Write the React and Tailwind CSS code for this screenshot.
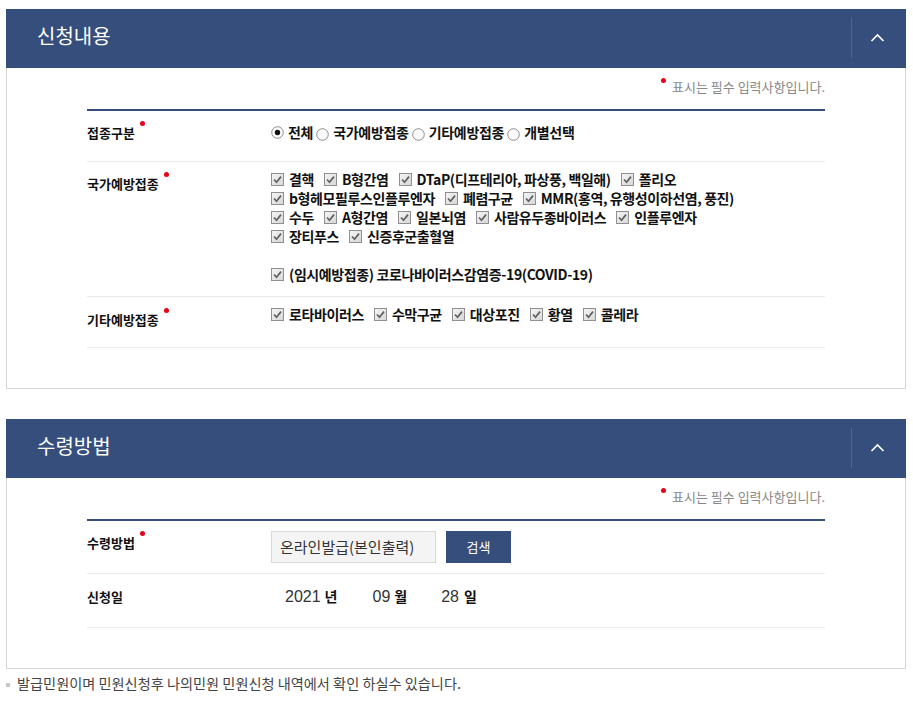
import React from "react";

const FONT = "font-['Noto_Sans_CJK_KR','Noto_Sans',sans-serif]";

function Chevron() {
  return (
    <svg width="15" height="9" viewBox="0 0 15 9" fill="none">
      <polyline points="1.5,8 7.5,2 13.5,8" stroke="#ffffff" strokeWidth="1.7" />
    </svg>
  );
}

function Check() {
  return (
    <svg width="13" height="13" viewBox="0 0 13 13" className="shrink-0">
      <defs>
        <linearGradient id="cbg" x1="0" y1="0" x2="1" y2="1">
          <stop offset="0" stopColor="#f6f6f6" />
          <stop offset="1" stopColor="#d6d6d6" />
        </linearGradient>
      </defs>
      <rect x="0.5" y="0.5" width="12" height="12" fill="url(#cbg)" stroke="#8f8f8f" />
      <polyline points="3,6.5 5.5,9.3 10,3.6" fill="none" stroke="#606060" strokeWidth="1.7" />
    </svg>
  );
}

function Radio({ on }) {
  return (
    <svg width="13" height="13" viewBox="0 0 13 13" className={on ? "shrink-0" : "shrink-0 translate-y-[2px]"}>
      <circle cx="6.5" cy="6.5" r="5.8" fill="#fbfbfb" stroke="#8d8d8d" />
      {on && <circle cx="6.5" cy="6.5" r="2.7" fill="#111111" />}
    </svg>
  );
}

function Dot({ className = "" }) {
  return <span className={"inline-block w-[5px] h-[5px] rounded-full bg-[#e5001c] " + className} />;
}

function Label({ text, required, pt = "pt-[12px]" }) {
  return (
    <div className={"w-[184px] shrink-0 flex items-start " + pt}>
      <span className="text-[13px] leading-[19px] font-bold text-[#111]">{text}</span>
      {required && <Dot className="ml-[5px] -mt-[2px]" />}
    </div>
  );
}

function Item({ text }) {
  return (
    <span className="inline-flex items-center mr-[10px]">
      <Check />
      <span className="ml-[5px] text-[14px] font-bold text-[#111] whitespace-nowrap tracking-[-0.4px]">{text}</span>
    </span>
  );
}

function Line({ items }) {
  return (
    <div className="flex items-center h-[19px]">
      {items.map((t) => (
        <Item key={t} text={t} />
      ))}
    </div>
  );
}

function Panel({ title, children }) {
  return (
    <section className="w-[900px]">
      <header className="h-[59px] bg-[#354e7b] flex items-center">
        <h2 className="flex-1 pl-[31px] pb-[6px] text-[20px] text-white leading-none">{title}</h2>
        <div className="w-[55px] h-[40px] mb-[1px] border-l border-[#4d6692] flex items-center justify-center pr-[3px] pb-[2px]">
          <Chevron />
        </div>
      </header>
      <div className="border border-t-0 border-[#d4d4d4] px-[80px] pt-[10px] pb-[40px]">
        <div className="flex justify-end items-start h-[18px] mb-[13px]">
          <Dot className="mt-[0px] mr-[6px]" />
          <span className="text-[13px] leading-[18px] text-[#888]">표시는 필수 입력사항입니다.</span>
        </div>
        <div className="border-t-2 border-[#354e7b]">{children}</div>
      </div>
    </section>
  );
}

export default function App() {
  const national = [
    ["결핵", "B형간염", "DTaP(디프테리아, 파상풍, 백일해)", "폴리오"],
    ["b형헤모필루스인플루엔자", "폐렴구균", "MMR(홍역, 유행성이하선염, 풍진)"],
    ["수두", "A형간염", "일본뇌염", "사람유두종바이러스", "인플루엔자"],
    ["장티푸스", "신증후군출혈열"],
  ];
  const other = ["로타바이러스", "수막구균", "대상포진", "황열", "콜레라"];
  const radios = ["전체", "국가예방접종", "기타예방접종", "개별선택"];

  return (
    <div className={"min-h-[701px] w-[913px] bg-white pt-[9px] px-[6px] text-[#333] " + FONT}>
      <Panel title="신청내용">
        <div className="flex border-b border-[#eaeaea] h-[51px]">
          <Label text="접종구분" required />
          <div className="pt-[12px] flex items-center h-[31px]">
            {radios.map((r, i) => (
              <span key={r} className="inline-flex items-center mr-[3px]">
                <Radio on={i === 0} />
                <span className="ml-[4px] text-[14px] font-bold text-[#111] tracking-[-0.3px]">{r}</span>
              </span>
            ))}
          </div>
        </div>
        <div className="flex border-b border-[#eaeaea] h-[135px]">
          <Label text="국가예방접종" required />
          <div className="pt-[8px]">
            {national.map((l, i) => (
              <Line key={i} items={l} />
            ))}
            <div className="h-[19px]" />
            <Line items={["(임시예방접종) 코로나바이러스감염증-19(COVID-19)"]} />
          </div>
        </div>
        <div className="flex border-b border-[#eaeaea] h-[51px]">
          <Label text="기타예방접종" required pt="pt-[13px]" />
          <div className="pt-[8px]">
            <Line items={other} />
          </div>
        </div>
      </Panel>

      <div className="h-[30px]" />

      <Panel title="수령방법">
        <div className="flex border-b border-[#eaeaea] h-[53px]">
          <Label text="수령방법" required />
          <div className="pt-[10px] flex">
            <div className="w-[165px] h-[32px] bg-[#f4f4f4] border border-[#d9d9d9] pl-[8px] flex items-center text-[15px] text-[#333]">
              온라인발급(본인출력)
            </div>
            <button className="ml-[10px] w-[65px] h-[32px] bg-[#354e7b] text-white text-[13px]">검색</button>
          </div>
        </div>
        <div className="flex border-b border-[#eaeaea] h-[54px]">
          <Label text="신청일" pt="pt-[13px]" />
          <div className="pt-[13px] flex items-baseline h-[32px] leading-[19px]">
            <span className="ml-[14px] text-[16px] text-[#333] font-['Liberation_Sans',sans-serif]">2021</span>
            <span className="ml-[4px] text-[14px] font-bold text-[#111]">년</span>
            <span className="ml-[35px] text-[16px] text-[#333] font-['Liberation_Sans',sans-serif]">09</span>
            <span className="ml-[4px] text-[14px] font-bold text-[#111]">월</span>
            <span className="ml-[34px] text-[16px] text-[#333] font-['Liberation_Sans',sans-serif]">28</span>
            <span className="ml-[5px] text-[14px] font-bold text-[#111]">일</span>
          </div>
        </div>
      </Panel>

      <div className="flex items-center pt-[5px] h-[24px]">
        <span className="w-[4px] h-[4px] bg-[#c8c8c8] mr-[7px] mt-[3px]" />
        <span className="text-[14.2px] leading-[19px] text-[#444]">
          발급민원이며 민원신청후 나의민원 민원신청 내역에서 확인 하실수 있습니다.
        </span>
      </div>
    </div>
  );
}
